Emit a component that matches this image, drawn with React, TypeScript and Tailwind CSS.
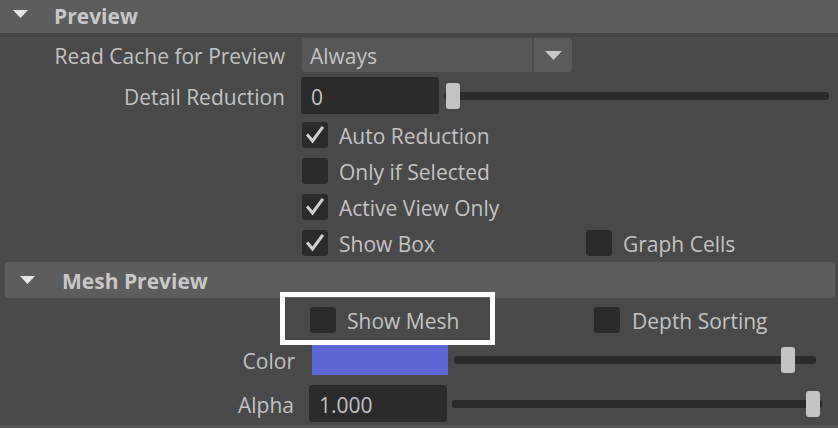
import React from "react";

const Check = () => (
  <svg width="26" height="26" viewBox="0 0 26 26" className="block">
    <polyline points="6,13.5 10.5,19 20,6" fill="none" stroke="#d0d0d0" strokeWidth="3" strokeLinecap="square" strokeLinejoin="miter" />
  </svg>
);

const CheckBox = ({ checked }: { checked?: boolean }) => (
  <div className="w-[26px] h-[26px] rounded-[3px] bg-[#2b2b2b] shrink-0">{checked ? <Check /> : null}</div>
);

const Tri = () => (
  <svg width="15" height="8" viewBox="0 0 15 8" className="block">
    <polygon points="0,0 15,0 7.5,8" fill="#e6e6e6" />
  </svg>
);

const Slider = ({ width, pos, ml }: { width: number; pos: number; ml: string }) => (
  <div className={`relative h-[26px] ${ml}`} style={{ width }}>
    <div className="absolute left-0 right-0 top-[9px] h-[8px] rounded-[3px] bg-[#2b2b2b]" />
    <div className="absolute top-0 w-[14px] h-[26px] rounded-[3px] bg-[#c4c4c4]" style={{ left: pos }} />
  </div>
);

const CheckRow = ({ checked, label, extra }: { checked?: boolean; label: string; extra?: React.ReactNode }) => (
  <div className="flex items-center h-[36px]">
    <div className="w-[302px] shrink-0" />
    <CheckBox checked={checked} />
    <span className="ml-[11px] w-[247px] pt-[3px]">{label}</span>
    {extra}
  </div>
);

export default function App() {
  return (
    <div className="relative w-[838px] h-[428px] overflow-hidden bg-[#494949] text-[#c3c3c3] text-[21px] leading-none font-['Open_Sans',sans-serif]">
      {/* Preview header */}
      <div className="flex items-center h-[37px] bg-[#5d5d5d] border-b-[4px] border-[#434343]">
        <div className="ml-[13px] mt-[-5px]"><Tri /></div>
        <span className="ml-[26px] font-bold text-[#c8c8c8]">Preview</span>
      </div>

      {/* Read Cache */}
      <div className="flex items-center h-[34px] mt-px">
        <div className="w-[285px] text-right shrink-0 pt-[3px]">Read Cache for Preview</div>
        <div className="ml-[17px] flex h-[34px] w-[270px] rounded-[3px] overflow-hidden">
          <div className="flex-1 bg-[#575757] flex items-center pl-[8px] pt-[3px]">Always</div>
          <div className="w-[2px] bg-[#4d4d4d]" />
          <div className="w-[38px] bg-[#5b5b5b] flex items-center justify-center">
            <svg width="17" height="9" viewBox="0 0 17 9"><polygon points="0,0 17,0 8.5,9" fill="#c8c8c8" /></svg>
          </div>
        </div>
      </div>

      {/* Detail Reduction */}
      <div className="flex items-center h-[37px] mt-[5px]">
        <div className="w-[285px] text-right shrink-0 pt-[3px]">Detail Reduction</div>
        <div className="ml-[16px] w-[138px] h-[37px] rounded-[3px] bg-[#2b2b2b] flex items-center pl-[10px] pt-[3px]">0</div>
        <Slider width={385} pos={2} ml="ml-[5px]" />
      </div>

      <div className="mt-[3px]">
        <CheckRow checked label="Auto Reduction" />
        <CheckRow label="Only if Selected" />
        <CheckRow checked label="Active View Only" />
        <CheckRow
          checked
          label="Show Box"
          extra={
            <div className="flex items-center">
              <CheckBox />
              <span className="ml-[11px] pt-[3px]">Graph Cells</span>
            </div>
          }
        />
      </div>

      {/* Mesh Preview header */}
      <div className="flex items-center h-[36px] mt-px ml-[5px] mr-[3px] rounded-[3px] bg-[#5d5d5d]">
        <div className="ml-[15px]"><Tri /></div>
        <span className="ml-[27px] font-bold text-[#c8c8c8] pt-[3px]">Mesh Preview</span>
      </div>

      {/* Show Mesh row */}
      <div className="flex items-center h-[44px]">
        <div className="w-[310px] shrink-0" />
        <CheckBox />
        <span className="ml-[11px] w-[247px] pt-[3px]">Show Mesh</span>
        <CheckBox />
        <span className="ml-[12px] pt-[3px]">Depth Sorting</span>
      </div>

      {/* Color row */}
      <div className="flex items-center h-[30px] mt-[3px]">
        <div className="w-[295px] text-right shrink-0 pt-[3px]">Color</div>
        <div className="ml-[17px] w-[136px] h-[30px] bg-[#5c67d4]" />
        <Slider width={362} pos={327} ml="ml-[6px]" />
      </div>

      {/* Alpha row */}
      <div className="flex items-center h-[37px] mt-[10px]">
        <div className="w-[294px] text-right shrink-0 pt-[3px]">Alpha</div>
        <div className="ml-[15px] w-[138px] h-[37px] rounded-[3px] bg-[#2b2b2b] flex items-center pl-[10px] pt-[3px]">1.000</div>
        <Slider width={370} pos={354} ml="ml-[5px]" />
      </div>

      <div className="absolute left-0 right-0 bottom-0 h-[3px] bg-[#555555]" />

      {/* Highlight overlay */}
      <div className="absolute left-[280px] top-[292px] w-[215px] h-[53px] border-[5px] border-white" />
    </div>
  );
}
